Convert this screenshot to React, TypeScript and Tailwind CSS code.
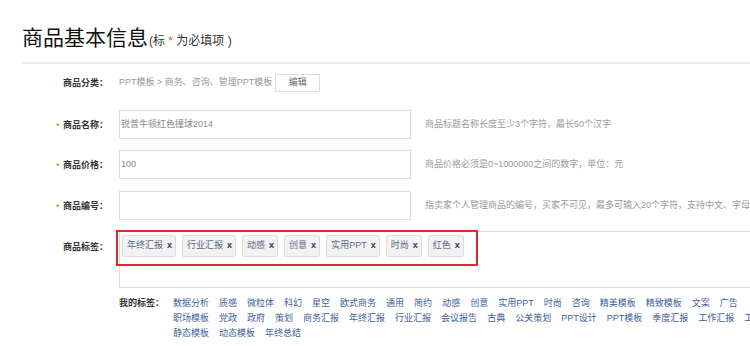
const FONT = "font-['Liberation_Sans','Noto_Sans_CJK_SC',sans-serif]";

const chosenTags = ["年终汇报", "行业汇报", "动感", "创意", "实用PPT", "时尚", "红色"];

const myTagRows = [
  ["数据分析", "质感", "微粒体", "科幻", "星空", "欧式商务", "通用", "简约", "动感", "创意", "实用PPT", "时尚", "咨询", "精美模板", "精致模板", "文案", "广告"],
  ["职场模板", "党政", "政府", "策划", "商务汇报", "年终汇报", "行业汇报", "会议报告", "古典", "公关策划", "PPT设计", "PPT模板", "季度汇报", "工作汇报", "工"],
  ["静态模板", "动态模板", "年终总结"],
];

function Label({ text, required }: { text: string; required?: boolean }) {
  return (
    <div className="relative w-[56px] shrink-0 text-[9px] font-bold leading-[12px] text-[#333]">
      {required && (
        <span className="absolute left-[-7px] top-[1px] text-[9px] font-normal text-[#f05a28]">*</span>
      )}
      {text}
    </div>
  );
}

function InputRow({
  label,
  value,
  hint,
}: {
  label: string;
  value?: string;
  hint: string;
}) {
  return (
    <div className="flex h-[29px] items-center">
      <Label text={label} required />
      <div className="flex h-[29px] w-[292px] shrink-0 items-center border border-[#dedede] bg-white pl-[1px] text-[9px] text-[#888]">
        {value}
      </div>
      <span className="ml-[14px] whitespace-nowrap text-[9px] text-[#999]">{hint}</span>
    </div>
  );
}

export default function App() {
  return (
    <div className={`relative h-[346px] w-[750px] overflow-hidden bg-white ${FONT}`}>
      <div className="flex items-baseline pl-[22px] pt-[26px]">
        <h1 className="text-[21px] font-normal leading-[24px] text-[#111]">商品基本信息</h1>
        <span className="ml-[1px] text-[12px] text-[#333]">
          (标 <span className="text-[#f60]">*</span> 为必填项 )
        </span>
      </div>
      <div className="ml-[21px] mt-[12px] h-[2px] bg-[#ececec]" />

      <div className="pl-[63px]">
        <div className="mt-[10px] flex h-[18px] items-center">
          <Label text="商品分类：" />
          <span className="whitespace-nowrap text-[9px] text-[#999]">PPT模板 &gt; 商务、咨询、管理PPT模板</span>
          <button
            type="button"
            className="ml-[3px] flex h-[18px] w-[45px] items-center justify-center border border-[#dedede] bg-white text-[9px] text-[#666]"
          >
            编辑
          </button>
        </div>

        <div className="mt-[18px]">
          <InputRow label="商品名称：" value="锐普牛顿红色撞球2014" hint="商品标题名称长度至少3个字符，最长50个汉字" />
        </div>
        <div className="mt-[11px]">
          <InputRow label="商品价格：" value="100" hint="商品价格必须是0~1000000之间的数字，单位：元" />
        </div>
        <div className="mt-[12px]">
          <InputRow
            label="商品编号："
            hint="指卖家个人管理商品的编号，买家不可见，最多可输入20个字符，支持中文、字母、"
          />
        </div>

        <div className="mt-[11px] flex">
          <div className="pt-[10px]">
            <Label text="商品标签：" />
          </div>
          <div className="relative h-[57px] w-[640px] shrink-0 border border-[#dedede] bg-white">
            <div className="flex gap-[6px] pl-[2px] pt-[3px]">
              {chosenTags.map((t) => (
                <span
                  key={t}
                  className="flex h-[22px] items-center rounded-[2px] border border-[#dcdcdc] bg-[#f2f2f2] pl-[4px] pr-[3px] text-[9px] text-[#5a6a86]"
                >
                  {t}
                  <span className="ml-[4px] text-[9px] font-bold text-[#2b3d63]">x</span>
                </span>
              ))}
            </div>
            <div className="pointer-events-none absolute left-[-4px] top-[-2px] h-[36px] w-[362px] border-2 border-[#e0272f]" />
          </div>
        </div>
      </div>

      <div className="mt-[8px] flex pl-[119px] text-[9px] leading-[15px]">
        <span className="w-[54px] shrink-0 font-bold text-[#333]">我的标签：</span>
        <div className="flex flex-col">
          {myTagRows.map((row, i) => (
            <div key={i} className="flex gap-x-[10px] whitespace-nowrap">
              {row.map((t) => (
                <a key={t} className="text-[#40609a]">
                  {t}
                </a>
              ))}
            </div>
          ))}
        </div>
      </div>
    </div>
  );
}
